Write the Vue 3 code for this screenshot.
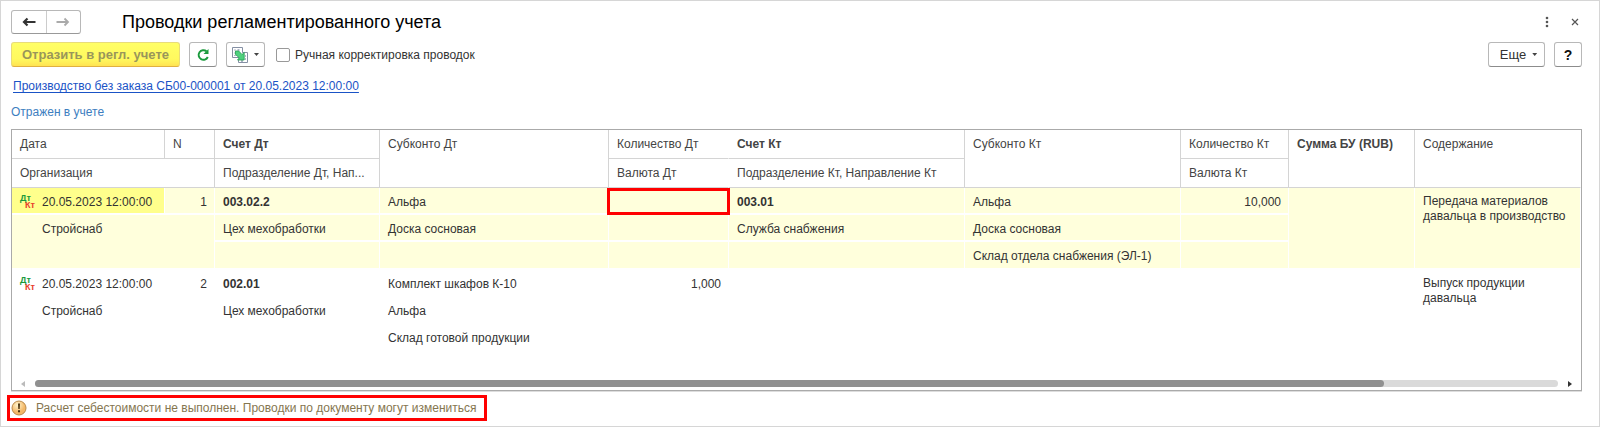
<script setup>
import { ref } from 'vue'

const manual = ref(false)

const columns = [153, 50, 165, 229, 120, 236, 216, 108, 126, 166]

const entries = [
  {
    n: 1,
    active: true,
    date: '20.05.2023 12:00:00',
    org: 'Стройснаб',
    dt: { account: '003.02.2', unit: 'Цех мехобработки', sub: ['Альфа', 'Доска сосновая', ''], qty: '', marked: true },
    kt: { account: '003.01', unit: 'Служба снабжения', sub: ['Альфа', 'Доска сосновая', 'Склад отдела снабжения (ЭЛ-1)'], qty: '10,000' },
    note: 'Передача материалов давальца в производство'
  },
  {
    n: 2,
    active: false,
    date: '20.05.2023 12:00:00',
    org: 'Стройснаб',
    dt: { account: '002.01', unit: 'Цех мехобработки', sub: ['Комплект шкафов К-10', 'Альфа', 'Склад готовой продукции'], qty: '1,000', marked: false },
    kt: { account: '', unit: '', sub: ['', '', ''], qty: '' },
    note: 'Выпуск продукции давальца'
  }
]
</script>

<template>
  <main class="page">
    <header class="titlebar">
      <div class="nav">
        <button type="button" aria-label="Назад">
          <svg width="14" height="10" viewBox="0 0 14 10"><path d="M13.500 5H2M5.500 1.500L2 5l3.500 3.500" fill="none" stroke="#333" stroke-width="2.200" /></svg>
        </button>
        <button type="button" aria-label="Вперед">
          <svg width="14" height="10" viewBox="0 0 14 10"><path d="M0.500 5h11.500M8.500 1.500L12 5 8.500 8.500" fill="none" stroke="#aaa" stroke-width="1.800" /></svg>
        </button>
      </div>
      <h1>Проводки регламентированного учета</h1>
      <div class="window-tools">
        <button type="button" aria-label="Меню">
          <svg width="4" height="12" viewBox="0 0 4 12" fill="#555"><circle cx="2" cy="2" r="1.300" /><circle cx="2" cy="6" r="1.300" /><circle cx="2" cy="10" r="1.300" /></svg>
        </button>
        <button type="button" aria-label="Закрыть">
          <svg width="8" height="8" viewBox="0 0 8 8"><path d="M1 1l6 6M7 1L1 7" stroke="#555" stroke-width="1.200" /></svg>
        </button>
      </div>
    </header>

    <div class="toolbar">
      <button type="button" class="btn primary">Отразить в регл. учете</button>
      <button type="button" class="btn square" aria-label="Обновить">
        <svg width="14" height="14" viewBox="0 0 14 14"><path d="M10.500 3.300A4.800 4.800 0 1 0 11.800 9" fill="none" stroke="#1a9a3c" stroke-width="1.900" /><path d="M12.500 1v5H7.500z" fill="#1a9a3c" /></svg>
      </button>
      <button type="button" class="btn copy" aria-label="Перейти">
        <svg width="16" height="16" viewBox="0 0 16 16">
          <path d="M0.500 0.500h10v10h-10z" fill="#fff" stroke="#8590a4" />
          <path d="M10.500 5.500h5v10h-9v-3" fill="#fff" stroke="#8590a4" />
          <path d="M2.500 3h1M5.500 3h2M2.500 6h1M2.500 8.500h1M13 9h1M13 12h1M9 14h2" stroke="#5c6b8c" />
          <path d="M3.500 4h3.200l3.300 3.500L12.200 5.500v7.500H5.500l1.800-2.200L3.500 7.500z" fill="#4fd07d" stroke="#23a052" stroke-width="0.800" />
        </svg>
        <span class="caret"></span>
      </button>
      <label class="check"><input v-model="manual" type="checkbox" />Ручная корректировка проводок</label>
      <button type="button" class="btn more">Еще<span class="caret"></span></button>
      <button type="button" class="btn square help">?</button>
    </div>

    <p class="doc"><a href="#document">Производство без заказа СБ00-000001 от 20.05.2023 12:00:00</a></p>
    <p class="state">Отражен в учете</p>

    <section class="panel">
      <table>
        <colgroup><col v-for="(w, i) in columns" :key="i" :style="{ width: w + 'px' }" /></colgroup>
        <thead>
          <tr>
            <th>Дата</th>
            <th>N</th>
            <th class="strong">Счет Дт</th>
            <th rowspan="2">Субконто Дт</th>
            <th class="open">Количество Дт</th>
            <th class="strong">Счет Кт</th>
            <th rowspan="2">Субконто Кт</th>
            <th>Количество Кт</th>
            <th rowspan="2" class="strong">Сумма БУ (RUB)</th>
            <th rowspan="2" class="open">Содержание</th>
          </tr>
          <tr>
            <th colspan="2">Организация</th>
            <th>Подразделение Дт, Нап...</th>
            <th class="open">Валюта Дт</th>
            <th>Подразделение Кт, Направление Кт</th>
            <th>Валюта Кт</th>
          </tr>
        </thead>
        <tbody v-for="e in entries" :key="e.n" :class="{ active: e.active }">
          <tr>
            <td class="date">
              <span class="with-icon">
                <span class="dtkt"><span class="d">Дт</span><span class="k">Кт</span></span>{{ e.date }}
              </span>
            </td>
            <td class="num">{{ e.n }}</td>
            <td class="strong">{{ e.dt.account }}</td>
            <td>{{ e.dt.sub[0] }}</td>
            <td class="num" :class="{ marked: e.dt.marked }">{{ e.dt.qty }}</td>
            <td class="strong">{{ e.kt.account }}</td>
            <td>{{ e.kt.sub[0] }}</td>
            <td class="num">{{ e.kt.qty }}</td>
            <td rowspan="3"></td>
            <td rowspan="3" class="note">{{ e.note }}</td>
          </tr>
          <tr>
            <td rowspan="2" colspan="2" class="org">{{ e.org }}</td>
            <td>{{ e.dt.unit }}</td>
            <td>{{ e.dt.sub[1] }}</td>
            <td></td>
            <td>{{ e.kt.unit }}</td>
            <td>{{ e.kt.sub[1] }}</td>
            <td></td>
          </tr>
          <tr class="last">
            <td></td>
            <td>{{ e.dt.sub[2] }}</td>
            <td></td>
            <td></td>
            <td>{{ e.kt.sub[2] }}</td>
            <td></td>
          </tr>
        </tbody>
      </table>
      <div class="scroll">
        <svg width="4" height="6" viewBox="0 0 4 6"><path d="M4 0v6L0 3z" fill="#bbb" /></svg>
        <div class="track"><div class="thumb"></div></div>
        <svg width="4" height="6" viewBox="0 0 4 6"><path d="M0 0v6l4-3z" fill="#333" /></svg>
      </div>
    </section>

    <footer class="warning">
      <svg width="16" height="16" viewBox="0 0 16 16">
        <defs><radialGradient id="amber" cx="40%" cy="30%"><stop offset="0" stop-color="#fff6cf" /><stop offset="1" stop-color="#f3b868" /></radialGradient></defs>
        <circle cx="8" cy="8" r="7" fill="url(#amber)" stroke="#b98a4a" />
        <path d="M7 3.500h2L8.700 9H7.300zM7 10.300h2v2H7z" fill="#4a3410" />
      </svg>
      <span>Расчет себестоимости не выполнен. Проводки по документу могут измениться</span>
    </footer>
  </main>
</template>

<style>
body { background: #fff; }
</style>

<style scoped>
* { box-sizing: border-box; }
.page {
  display: flex;
  flex-direction: column;
  min-height: calc(100vh - 1px);
  padding: 9px 17px 5px 10px;
  border: 1px solid #d6d6d6;
  font: 12px/16px "Liberation Sans", Arial, sans-serif;
  color: #333;
  background: #fff;
}
button { font: inherit; color: inherit; }
.titlebar { display: flex; align-items: center; height: 24px; }
.nav { display: flex; width: 70px; height: 24px; border: 1px solid #b8b8b8; border-bottom-color: #999; border-radius: 3px; }
.nav button { flex: 1; display: flex; align-items: center; justify-content: center; padding: 0; border: 0; background: none; }
.nav button + button { border-left: 1px solid #ccc; }
h1 { flex: 1; margin: 0 0 0 41px; font-size: 18px; line-height: 24px; font-weight: 400; color: #000; }
.window-tools { display: flex; gap: 14px; }
.window-tools button { display: flex; align-items: center; justify-content: center; width: 14px; height: 20px; padding: 0; border: 0; background: none; }
.toolbar { display: flex; align-items: center; margin-top: 8px; }
.btn { display: flex; align-items: center; justify-content: center; height: 25px; padding: 0; border: 1px solid #b8b8b8; border-bottom-color: #8c8c8c; border-radius: 3px; background: #fff; }
.primary { width: 169px; margin-right: 9px; font-size: 13px; font-weight: 700; color: #99965a; background: linear-gradient(#ffff66, #fff95e 70%, #ffe352); border-color: #e8dc7a; border-bottom-color: #e0b040; }
.square { width: 28px; }
.copy { width: 39px; margin-left: 9px; gap: 6px; }
.caret { width: 5px; height: 3px; background: #444; clip-path: polygon(0 0, 100% 0, 50% 100%); }
.check { display: flex; align-items: center; gap: 5px; margin-left: 11px; }
.check input { appearance: none; width: 14px; height: 14px; margin: 0; border: 1px solid #999; border-radius: 2px; background: #fff; }
.more { width: 57px; margin-left: auto; padding-left: 4px; gap: 6px; font-size: 13px; }
.help { margin-left: 9px; font-size: 14px; font-weight: 700; color: #111; }
.doc, .state { margin: 0; line-height: 16px; }
.doc { margin-top: 11px; padding-left: 2px; }
.doc a { color: #1a53c6; text-underline-offset: 2px; }
.state { margin-top: 10px; color: #3d7ebf; }
.panel { flex: 1; display: flex; flex-direction: column; margin-top: 9px; border: 1px solid #aaa; box-shadow: 0 1px 0 #ddd; }
table { width: 100%; table-layout: fixed; border-collapse: separate; border-spacing: 0; }
th, td { padding: 0 7px 0 8px; text-align: left; font-weight: 400; white-space: nowrap; overflow: hidden; text-overflow: ellipsis; vertical-align: top; border-right: 1px solid #fff; }
th { height: 29px; padding-top: 6px; color: #444; border-right-color: #d4d4d4; border-bottom: 1px solid #d4d4d4; }
th.open { border-right-color: #fff; }
td { height: 27px; padding-top: 6px; border-bottom: 2px solid #fff; }
.last td { height: 28px; }
th.strong, td.strong { font-weight: 700; }
td.num { text-align: right; }
.active td { background: #ffffdc; }
.active td.date { background: #ffff8c; }
.with-icon { display: flex; align-items: center; height: 16px; }
.dtkt { display: flex; flex-direction: column; width: 22px; font-size: 9px; line-height: 7px; font-weight: 700; }
.d { color: #1a9a3c; }
.k { padding-left: 5px; color: #e8402c; }
td.org { padding-left: 30px; }
td.note { white-space: normal; line-height: 15px; }
td.marked { position: relative; overflow: visible; }
td.marked::after { content: ""; position: absolute; inset: 0 -2px -2px -2px; border: 3px solid #f00; }
.scroll { display: flex; align-items: center; gap: 10px; margin-top: auto; padding: 0 9px 3px; }
.track { flex: 1; height: 7px; border-radius: 4px; background: #dadada; }
.thumb { width: 88.6%; height: 7px; border-radius: 4px; background: #909090; }
.warning { display: flex; align-items: center; align-self: flex-start; gap: 9px; height: 26px; margin: 4px 0 0 -4px; padding: 0 8px 0 1px; border: 3px solid #f00; color: #857650; }
</style>
